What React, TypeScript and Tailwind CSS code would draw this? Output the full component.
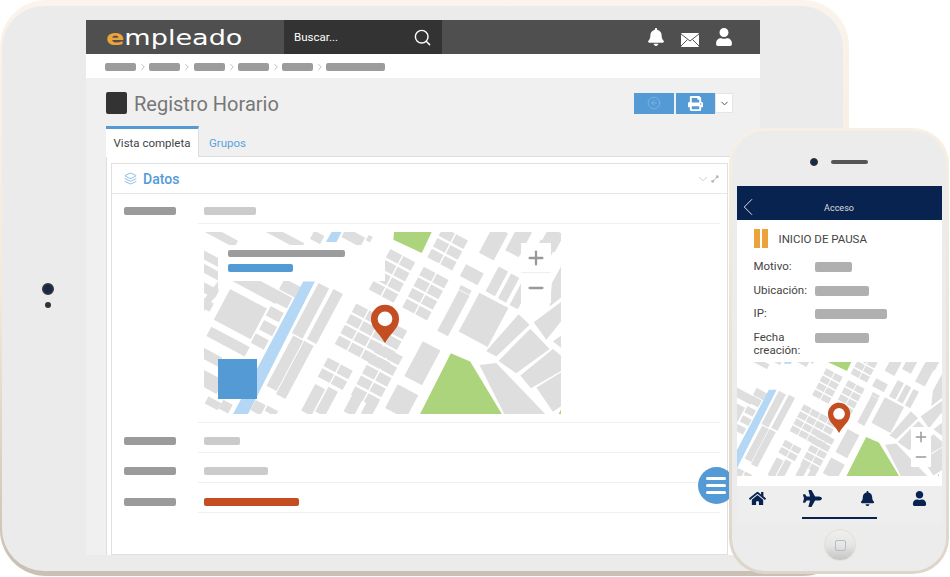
import { ChevronDown, ChevronLeft, ChevronRight, CircleArrowLeft, Layers, Minus, Plus, Search } from "lucide-react";
import { FaBell, FaExpandAlt, FaHome, FaPlane, FaPrint, FaUser } from "react-icons/fa";

type Block = [number, number, number, number];

const grid = (ox: number, oy: number, cols: number, rows: number, w = 40, h = 29): Block[] => {
  const cells: Block[] = [];
  for (let r = 0; r < rows; r++) {
    for (let c = 0; c < cols; c++) {
      cells.push([ox + c * 39 - r * 17, oy + c * 21 + r * 32, w, h]);
    }
  }
  return cells;
};

const blocks: Block[] = [
  [95, 35, 100, 24], [280, 36, 130, 24], [382, 38, 34, 28], [490, 38, 64, 32], [538, 42, 14, 18],
  [60, 100, 80, 24], [60, 140, 80, 24], [55, 195, 60, 28], [50, 240, 36, 28],
  [200, 185, 150, 40], [300, 190, 54, 36], [152, 268, 125, 104],
  [280, 225, 44, 36], [255, 268, 44, 32], [235, 310, 44, 32], [210, 350, 44, 32],
  [115, 350, 130, 32], [60, 395, 70, 30], [60, 470, 70, 46], [70, 535, 44, 24], [108, 545, 32, 30],
  [362, 258, 36, 170], [405, 275, 32, 170], [285, 415, 34, 170], [315, 435, 32, 180],
  [205, 548, 34, 34], [245, 558, 36, 18],
  [370, 525, 34, 90], [410, 530, 32, 84], [490, 540, 34, 60], [540, 548, 32, 54],
  [910, 55, 50, 92], [985, 50, 46, 84], [1085, 45, 50, 60], [845, 150, 60, 40], [825, 195, 36, 14],
  [790, 265, 36, 138], [697, 415, 60, 118], [635, 530, 70, 80], [880, 285, 98, 132],
  [920, 170, 32, 84], [955, 190, 28, 84], [990, 210, 28, 84], [1050, 100, 50, 100],
  ...grid(510, 258, 4, 4),
  ...grid(575, 378, 2, 5),
  ...grid(612, 95, 2, 4),
  ...grid(712, 148, 2, 4),
  ...grid(770, 30, 2, 3),
  ...grid(425, 420, 2, 2),
];

const polys = [
  "888,378 985,268 1018,300 918,395",
  "925,408 1020,312 1078,372 978,445",
  "990,452 1088,372 1130,408 1130,428 1022,490",
  "1030,292 1130,218 1130,268 1068,345",
  "1088,350 1130,318 1130,382",
  "868,420 918,414 1065,567 942,567",
  "1038,488 1130,432 1130,532 1088,560",
  "1085,175 1130,92 1130,205 1078,245",
  "42,225 85,170 85,205 42,260",
];

const MapArt = ({ viewBox, pinScale = 1, pinX = 0, pinY = 0 }: { viewBox: string; pinScale?: number; pinX?: number; pinY?: number }) => (
  <svg viewBox={viewBox} preserveAspectRatio="xMidYMid slice" className="w-full h-full block bg-white">
    {blocks.map(([x, y, w, h], i) => (
      <rect key={i} x={x - w / 2} y={y - h / 2} width={w} height={h} fill="#dedede" transform={`rotate(28 ${x} ${y})`} />
    ))}
    {polys.map((p) => (
      <polygon key={p} points={p} fill="#dedede" />
    ))}
    <polygon points="340,170 375,170 175,567 130,567" fill="#b4d7f5" />
    <polygon points="408,52 425,22 455,22 440,52" fill="#b4d7f5" />
    <polygon points="690,567 782,385 840,410 935,567" fill="#acd47c" />
    <polygon points="612,22 725,22 695,85 610,45" fill="#acd47c" />
    <polygon points="1105,567 1113,552 1113,567" fill="#acd47c" />
    <g transform={`translate(${585 + pinX} ${355 + pinY}) scale(${pinScale}) translate(-585 -355)`}>
      <path d="M585 355C565 320 543 312 543 282A42 42 0 0 1 627 282C627 312 605 320 585 355Z" fill="#c44e22" />
      <circle cx="585" cy="282" r="22" fill="#fff" />
    </g>
  </svg>
);

const Bar = ({ className }: { className: string }) => <div className={`h-2 rounded-[2px] ${className}`} />;

const DataRow = ({ value, pt }: { value: string; pt: string }) => (
  <div className="flex h-[30px]">
    <div className={`w-[74px] ${pt}`}>
      <Bar className="w-[52px] bg-[#9b9b9b]" />
    </div>
    <div className={`flex-1 border-b border-[#efefef] pl-[6px] ${pt}`}>
      <Bar className={value} />
    </div>
  </div>
);

const Tablet = () => (
  <div className="absolute left-0 top-0 w-[849px] h-[576px] rounded-[46px] bg-gradient-to-b from-[#fbf4ec] via-[#f4e9dc] to-[#c9c0b4] pt-[6px] pl-[2px] pr-[6px] pb-[5px]">
    <div className="relative h-full rounded-[42px] bg-[#ebebeb] pt-[14px] pl-[84px]">
      <div className="absolute left-[40px] top-[277px] w-[12px] h-[12px] rounded-full bg-[#16294a] border-2 border-[#333]" />
      <div className="absolute left-[43px] top-[296px] w-[6px] h-[6px] rounded-full bg-[#333]" />

      <div className="w-[674px] h-[535px] flex flex-col bg-[#f0f0f0] overflow-hidden">
        <div className="flex h-[34px] bg-[#4f4f4f] shrink-0">
          <div className="w-[198px] pl-[20px] flex items-center">
            <span className="font-['DejaVu_Sans',sans-serif] text-[22px] leading-none origin-left scale-x-[1.23] mt-[1px] text-white whitespace-nowrap">
              <span className="font-bold text-[#eda33c]">e</span>mpleado
            </span>
          </div>
          <div className="w-[158px] bg-[#333] flex items-center justify-between pl-[10px] pr-[10px]">
            <span className="text-[11.5px] text-white pt-[2px]">Buscar...</span>
            <Search size={19} strokeWidth={1.8} className="text-white" />
          </div>
          <div className="flex-1 flex items-center justify-end pr-[27px] gap-[16px] text-white">
            <FaBell size={18} className="mt-[-1px]" />
            <svg width="18" height="14" viewBox="0 0 18 14" className="mt-[6px]">
              <rect width="18" height="14" rx="1" fill="#fff" />
              <path d="M0 1L9 8L18 1M0 13L6.5 6.5M18 13L11.5 6.5" fill="none" stroke="#555" strokeWidth="1" />
            </svg>
            <FaUser size={18} className="mt-[-1px]" />
          </div>
        </div>

        <div className="flex items-center h-[24px] bg-white pl-[19px] pt-[2px] gap-[1.25px] shrink-0">
          {[0, 1, 2, 3, 4].map((i) => (
            <div key={i} className="flex items-center gap-[2px]">
              <div className="w-[31px] h-[8px] rounded-[2px] bg-[#9c9c9c]" />
              <ChevronRight size={10} strokeWidth={1.3} className="text-[#888]" />
            </div>
          ))}
          <div className="w-[59px] h-[8px] rounded-[2px] bg-[#9c9c9c]" />
        </div>

        <div className="flex-1 flex flex-col pl-[20px] pr-[27px] pt-[14px] min-h-0">
          <div className="flex items-center justify-between h-[22px]">
            <div className="flex items-center gap-[7px]">
              <div className="w-[21px] h-[22px] rounded-[2px] bg-[#333]" />
              <h1 className="text-[20px] font-normal text-[#777] leading-none pt-[1px]">Registro Horario</h1>
            </div>
            <div className="flex items-center">
              <div className="w-[40px] h-[21px] bg-[#549bd6] flex items-center justify-center">
                <CircleArrowLeft size={14} strokeWidth={1} className="text-[#8fc0ea]" />
              </div>
              <div className="w-[39px] h-[21px] ml-[2px] bg-[#549bd6] flex items-center justify-center">
                <FaPrint size={15} className="text-white" />
              </div>
              <div className="w-[18px] h-[20px] bg-white border border-[#e5e5e5] flex items-center justify-center">
                <ChevronDown size={11} className="text-[#444]" />
              </div>
            </div>
          </div>

          <div className="flex h-[30px] mt-[12px] shrink-0">
            <div className="w-[93px] h-[31px] relative z-10 bg-white border-t-[3px] border-r border-[#ddd] border-t-[#549bd6] flex items-center justify-center text-[11.5px] text-[#444] pt-[2px]">
              Vista completa
            </div>
            <div className="pl-[10px] pt-[5px] flex items-center text-[11.5px] text-[#5aa3dd]">Grupos</div>
          </div>

          <div className="flex-1 flex flex-col bg-white border-t border-l border-[#ddd] pl-[4px] pt-[6px] min-h-0">
            <div className="flex-1 w-[617px] bg-white border border-[#e0e0e0]">
              <div className="flex items-center justify-between h-[30px] border-b border-[#e6e6e6] pl-[12px] pr-[8px]">
                <div className="flex items-center gap-[6px] text-[#549bd6]">
                  <Layers size={13} strokeWidth={1.2} />
                  <span className="text-[14px] font-medium pt-[2px]">Datos</span>
                </div>
                <div className="flex items-center gap-[1px] text-[#aaa]">
                  <ChevronDown size={14} strokeWidth={1} />
                  <FaExpandAlt size={8} />
                </div>
              </div>
              <div className="pl-[12px] pr-[7px]">
                <DataRow value="w-[52px] bg-[#cbcbcb]" pt="pt-[13px]" />
                <div className="flex">
                  <div className="w-[74px]" />
                  <div className="flex-1 border-b border-[#efefef] pl-[6px] pt-[8px] pb-[8px]">
                    <div className="relative w-[357px] h-[182px]">
                      <MapArt viewBox="42 22 1071 545" />
                      <div className="absolute left-[14px] top-[13px] w-[167px] h-[36px] bg-white pl-[10px] pt-[5px]">
                        <div className="w-[117px] h-[7px] rounded-[2px] bg-[#9c9c9c]" />
                        <div className="w-[65px] h-[8px] mt-[7px] rounded-[2px] bg-[#549bd6]" />
                      </div>
                      <div className="absolute left-[14px] top-[127px] w-[39px] h-[40px] bg-[#549bd6]" />
                      <div className="absolute left-[317px] top-[11px] w-[30px] h-[60px] bg-white flex flex-col text-[#999]">
                        <div className="h-[30px] flex items-center justify-center border-b border-[#eee]">
                          <Plus size={22} strokeWidth={2.5} />
                        </div>
                        <div className="h-[30px] flex items-center justify-center">
                          <Minus size={22} strokeWidth={2.5} />
                        </div>
                      </div>
                    </div>
                  </div>
                </div>
                <DataRow value="w-[36px] bg-[#cbcbcb]" pt="pt-[14px]" />
                <DataRow value="w-[64px] bg-[#cbcbcb]" pt="pt-[14px]" />
                <DataRow value="w-[95px] bg-[#c44e22]" pt="pt-[15px]" />
              </div>
            </div>
          </div>
        </div>
      </div>

      <div className="absolute left-[696px] top-[461px] w-[37px] h-[37px] rounded-full bg-[#549bd6] flex flex-col items-center justify-center gap-[4px] pr-[1px]">
        <div className="w-[20px] h-[3px] rounded-full bg-white" />
        <div className="w-[20px] h-[3px] rounded-full bg-white" />
        <div className="w-[20px] h-[3px] rounded-full bg-white" />
      </div>
    </div>
  </div>
);

const PhoneField = ({ label, bar, h }: { label: React.ReactNode; bar: string; h: string }) => (
  <div className={`flex ${h}`}>
    <div className="w-[61px] text-[11.5px] leading-[13px] text-[#444]">{label}</div>
    <div className={`h-[10px] mt-[2px] rounded-[2px] bg-[#b0b0b0] ${bar}`} />
  </div>
);

const Phone = () => (
  <div className="absolute left-[729px] top-[128px] w-[220px] h-[446px] rounded-[36px] bg-gradient-to-b from-[#f8efe5] to-[#ddd5c9] p-[3px]">
    <div className="h-full rounded-[33px] bg-[#ececec] flex flex-col items-center">
      <div className="h-[55px] w-full flex items-center justify-center gap-[13px] pt-[6px] shrink-0">
        <div className="w-[8px] h-[8px] rounded-full bg-[#16294a] border border-[#333]" />
        <div className="w-[37px] h-[4px] rounded-full bg-[#555]" />
      </div>
      <div className="w-[205px] h-[337px] flex flex-col shrink-0">
        <div className="relative h-[34px] bg-[#08234f] flex items-center justify-center shrink-0">
          <ChevronLeft size={30} strokeWidth={0.8} className="absolute left-[-4px] top-[6px] text-[#ddd]" />
          <span className="text-[9px] text-[#ddd] pt-[11px]">Acceso</span>
        </div>
        <div className="h-[142px] bg-white pl-[17px] pt-[9px] shrink-0">
          <div className="flex items-center h-[19px]">
            <div className="w-[6px] h-[19px] bg-[#eda33c]" />
            <div className="w-[6px] h-[19px] ml-[2px] bg-[#eda33c]" />
            <span className="ml-[11px] text-[11.5px] text-[#444] pt-[3px]">INICIO DE PAUSA</span>
          </div>
          <div className="mt-[12px]">
            <PhoneField label="Motivo:" bar="w-[37px]" h="h-[24px]" />
            <PhoneField label="Ubicación:" bar="w-[54px]" h="h-[23px]" />
            <PhoneField label="IP:" bar="w-[72px]" h="h-[24px]" />
            <PhoneField label={<>Fecha<br />creación:</>} bar="w-[54px]" h="h-[28px]" />
          </div>
        </div>
        <div className="relative h-[114px] shrink-0 overflow-hidden">
          <MapArt viewBox="195 44 932 518" pinScale={1.2} pinX={74} pinY={12} />
          <div className="absolute left-[174px] top-[65px] w-[20px] h-[40px] bg-white flex flex-col text-[#999]">
            <div className="h-[20px] flex items-center justify-center">
              <Plus size={16} strokeWidth={2.2} />
            </div>
            <div className="h-[20px] flex items-center justify-center">
              <Minus size={16} strokeWidth={2.2} />
            </div>
          </div>
        </div>
        <div className="h-[10px] bg-white shrink-0" />
        <div className="flex-1 bg-[#eeeeee] flex flex-col items-center">
          <div className="w-full flex items-center justify-between text-[#08234f] pl-[12px] pr-[14px] pt-[3px] h-[22px]">
            <FaHome size={17} />
            <FaPlane size={19} />
            <FaBell size={15} />
            <FaUser size={15} />
          </div>
          <div className="w-[75px] h-[2px] mt-[9px] bg-[#08234f]" />
        </div>
      </div>
      <div className="mt-[6px] ml-[2px] w-[32px] h-[32px] rounded-full border border-[#e8ddcf] bg-gradient-to-b from-[#efefef] via-[#e6e6e6] to-[#c4c4c4] flex items-center justify-center">
        <div className="w-[11px] h-[11px] rounded-[2px] border border-[#bbb]" />
      </div>
    </div>
  </div>
);

export default function App() {
  return (
    <div className="relative w-[950px] h-[577px] bg-white overflow-hidden font-['Roboto',sans-serif]">
      <Tablet />
      <Phone />
    </div>
  );
}
